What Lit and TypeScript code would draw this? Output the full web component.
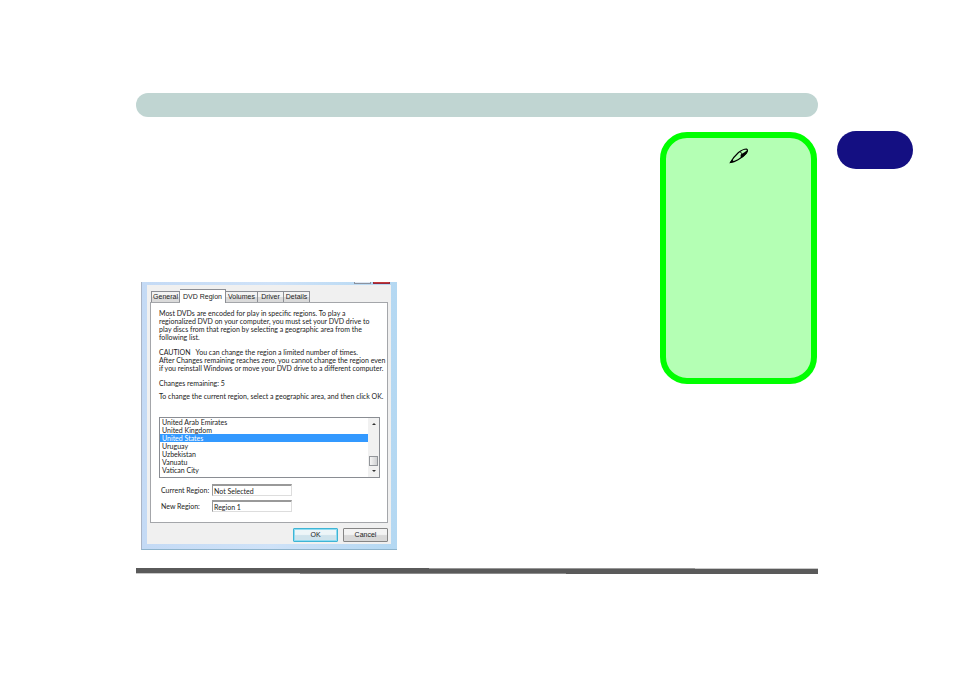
import { LitElement, html, css } from "lit";
import { customElement } from "lit/decorators.js";

@customElement("region-dialog")
class RegionDialog extends LitElement {
  static styles = css`
    :host {
      display: block;
      box-sizing: border-box;
      width: 256px;
      padding: 0 6px 0 5px;
      background: linear-gradient(90deg, #c4daf5, #cfe2f8 50%, #b4d8f2);
      border-left: 1px solid #a9b4c6;
      border-bottom: 1px solid #8fb4cc;
      font: 7px/8px Lato, "Liberation Sans", Arial, sans-serif;
      color: #222;
    }
    * { box-sizing: border-box; }
    .title {
      display: flex;
      justify-content: flex-end;
      gap: 2px;
      height: 3px;
      padding-right: 1px;
    }
    .cap { width: 17px; height: 2px; border: 1px solid #8b93a0; border-top: 0; background: #dce6f2; }
    .close { background: #c23a3a; border-color: #96283c; }
    .body { background: #f0f0f0; padding: 4px 3px 2px; }
    .tabs { display: flex; align-items: flex-end; height: 13px; padding-left: 1px; }
    button { font: 7px/8px "Liberation Sans", Arial, sans-serif; color: #222; padding: 0; margin: 0; white-space: nowrap; }
    .tab {
      height: 11px;
      border: 1px solid #8c8e94;
      border-bottom: 0;
      background: linear-gradient(#f3f3f3 45%, #dadada 55%);
    }
    .tab + .tab { border-left: 0; }
    .w1 { width: 29px; }
    .w2 { width: 32px; }
    .w3 { width: 26px; }
    .tab.active { width: 46px; height: 14px; margin-bottom: -1px; background: #fff; z-index: 1; }
    .panel {
      background: #fff;
      border: 1px solid #a4a6aa;
      height: 221px;
      padding: 6px 8px 0;
      display: flex;
      flex-direction: column;
      align-items: flex-start;
    }
    p { margin: 0 0 7px; white-space: nowrap; }
    .tight { margin-bottom: 5px; }
    .list {
      display: flex;
      width: 221px;
      height: 61px;
      margin-top: 10px;
      border: 1px solid #8a8d93;
      background: #fff;
    }
    select {
      appearance: none;
      flex: 1;
      min-width: 0;
      height: 59px;
      margin: 0;
      padding: 0;
      border: 0;
      border-radius: 0;
      outline: 0;
      overflow: hidden;
      background: #fff;
      font: inherit;
      color: #222;
    }
    option { min-height: 8px; height: 8px; padding: 0 2px; line-height: 8px; }
    option:checked { background: #3399ff linear-gradient(#3399ff, #3399ff); color: #fff; }
    .scroll {
      width: 11px;
      display: flex;
      flex-direction: column;
      align-items: center;
      background: #f1f1f1;
      padding: 5px 0;
    }
    .up, .down { border: 2px solid transparent; width: 0; height: 0; }
    .up { border-top: 0; border-bottom-color: #333; }
    .down { border-bottom: 0; border-top-color: #333; margin-top: 4px; }
    .thumb {
      width: 9px;
      height: 10px;
      margin-top: auto;
      border: 1px solid #92959a;
      background: linear-gradient(90deg, #f5f5f5, #cfd0d2);
    }
    .field { display: flex; align-items: center; height: 12px; margin-top: 4px; }
    .first { margin-top: 6px; }
    .field label { width: 53px; padding-left: 2px; white-space: nowrap; }
    input {
      width: 80px;
      height: 12px;
      margin: 0;
      padding: 0 1px;
      border: 1px solid #ddd;
      border-top: 2px solid #999;
      border-left-color: #999;
      border-radius: 0;
      outline: 0;
      background: #fff;
      font: inherit;
      color: #222;
    }
    .actions { display: flex; justify-content: flex-end; gap: 5px; padding-top: 5px; }
    .push {
      width: 45px;
      height: 14px;
      border: 1px solid #858585;
      border-radius: 1px;
      background: linear-gradient(#f3f3f3 45%, #d8d8d8 55%);
    }
    .default { border-color: #3fb4d4; background: linear-gradient(#edf5f8 45%, #cfe3ec 55%); box-shadow: inset 0 0 0 1px #8fdcf2; }
    .base { height: 5px; }
  `;

  private regions = ["United Arab Emirates", "United Kingdom", "United States", "Uruguay", "Uzbekistan", "Vanuatu", "Vatican City"];

  render() {
    return html`
      <div class="title"><span class="cap"></span><span class="cap close"></span></div>
      <div class="body">
        <div class="tabs" role="tablist">
          <button class="tab w1" role="tab">General</button>
          <button class="tab active" role="tab" aria-selected="true">DVD Region</button>
          <button class="tab w2" role="tab">Volumes</button>
          <button class="tab w3" role="tab">Driver</button>
          <button class="tab w3" role="tab">Details</button>
        </div>
        <div class="panel" role="tabpanel">
          <p>Most DVDs are encoded for play in specific regions. To play a<br />regionalized DVD on your computer, you must set your DVD drive to<br />play discs from that region by selecting a geographic area from the<br />following list.</p>
          <p>CAUTION &nbsp; You can change the region a limited number of times.<br />After Changes remaining reaches zero, you cannot change the region even<br />if you reinstall Windows or move your DVD drive to a different computer.</p>
          <p class="tight">Changes remaining: 5</p>
          <p>To change the current region, select a geographic area, and then click OK.</p>
          <div class="list">
            <select size="7" aria-label="Geographic area">
              ${this.regions.map((r) => html`<option ?selected=${r === "United States"}>${r}</option>`)}
            </select>
            <div class="scroll" aria-hidden="true">
              <span class="up"></span><span class="thumb"></span><span class="down"></span>
            </div>
          </div>
          <div class="field first"><label for="current">Current Region:</label><input id="current" readonly value="Not Selected" /></div>
          <div class="field"><label for="next">New Region:</label><input id="next" readonly value="Region 1" /></div>
        </div>
        <div class="actions">
          <button class="push default">OK</button>
          <button class="push">Cancel</button>
        </div>
      </div>
      <div class="base"></div>
    `;
  }
}

@customElement("app-root")
class AppRoot extends LitElement {
  static styles = css`
    :host { display: block; background: #fff; }
    * { box-sizing: border-box; }
    .page {
      display: grid;
      grid-template-columns: minmax(0, 1fr) 157px 76px;
      column-gap: 20px;
      padding: 93px 41px 99px 136px;
    }
    .band { grid-column: 1 / 3; height: 24px; margin-right: -1px; border-radius: 12px; background: #c0d5d2; }
    .content { padding: 165px 0 0 5px; }
    .note {
      height: 252px;
      margin-top: 15px;
      padding-top: 10px;
      border: 6px solid #00ff00;
      border-radius: 27px;
      background: #b4ffb4;
      text-align: center;
    }
    .note svg { display: block; margin: 0 auto; }
    .marker { height: 38px; margin-top: 14px; border-radius: 19px; background: #140f82; }
    .rule {
      grid-column: 1 / 3;
      height: 6px;
      margin: 18px -1px 0 0;
      background:
        linear-gradient(90deg, #5a5a5a 43%, #969696 43% 82%, #c8c8c8 82%) top / 100% 1px no-repeat,
        linear-gradient(90deg, #c8c8c8 24%, #8c8c8c 24% 63%, #5a5a5a 63%) bottom / 100% 1px no-repeat,
        #5a5a5a;
    }
  `;

  render() {
    return html`
      <main class="page">
        <div class="band"></div>
        <span></span>
        <section class="content"><region-dialog></region-dialog></section>
        <aside class="note" aria-label="Note">
          <svg width="20" height="16" viewBox="0 0 20 16" aria-hidden="true">
            <path d="M1.500 14.500 Q4 9.500 9.500 4.500 Q14 1 17.500 1 Q19.500 2 17.500 5 Q14 9 9 11.700 Q5 14 1.500 14.500 Z" fill="none" stroke="#000" stroke-width="1.200" />
            <path d="M.5 15.200 L3 11.500 L5.500 13.800 Z M11.500 8.500 Q12.500 5 15.500 4.200 L18.500 2 Q18.500 6 12.500 9.800 Z" />
            <path d="M11.500 4 Q13.500 5 12 8" fill="none" stroke="#000" />
          </svg>
        </aside>
        <div class="marker"></div>
        <div class="rule"></div>
      </main>
    `;
  }
}
